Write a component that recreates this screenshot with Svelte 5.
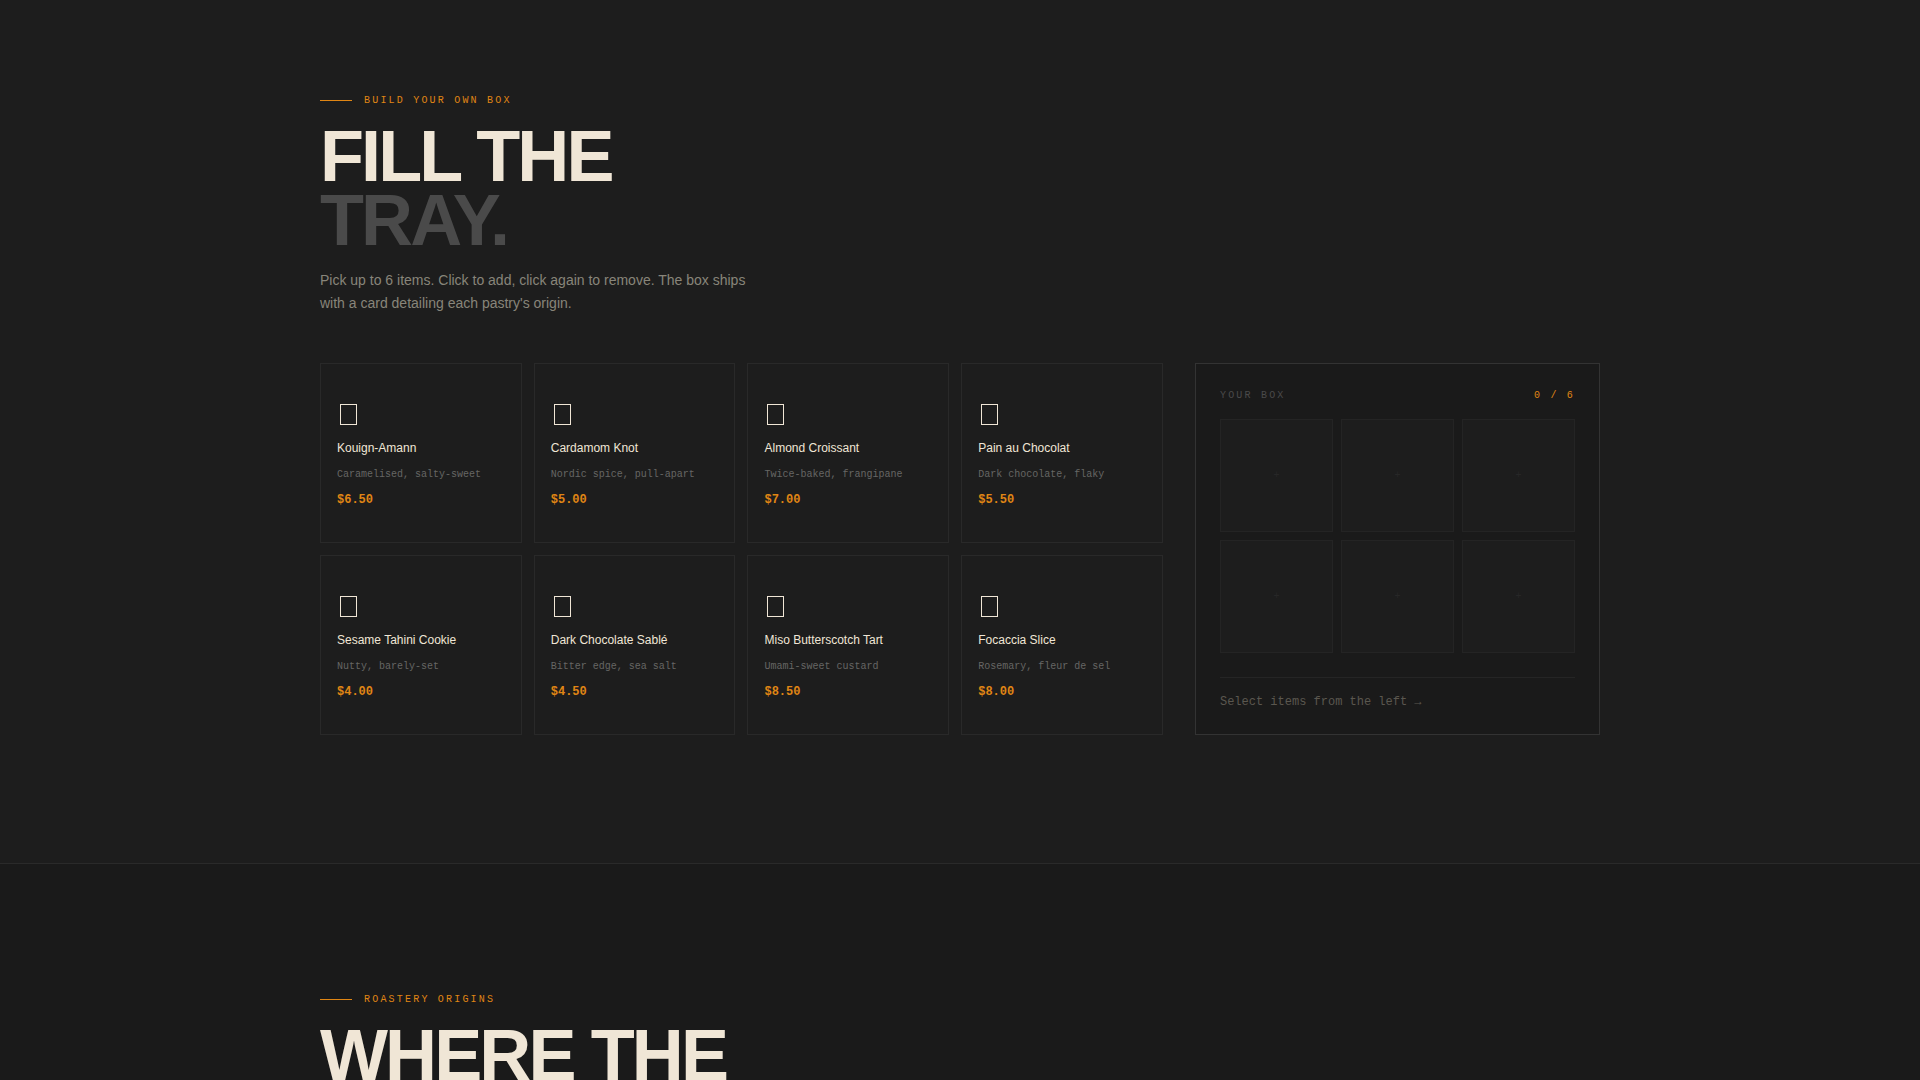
<script>
  const items = [
    { name: 'Kouign-Amann', note: 'Caramelised, salty-sweet', price: 6.5 },
    { name: 'Cardamom Knot', note: 'Nordic spice, pull-apart', price: 5 },
    { name: 'Almond Croissant', note: 'Twice-baked, frangipane', price: 7 },
    { name: 'Pain au Chocolat', note: 'Dark chocolate, flaky', price: 5.5 },
    { name: 'Sesame Tahini Cookie', note: 'Nutty, barely-set', price: 4 },
    { name: 'Dark Chocolate Sablé', note: 'Bitter edge, sea salt', price: 4.5 },
    { name: 'Miso Butterscotch Tart', note: 'Umami-sweet custard', price: 8.5 },
    { name: 'Focaccia Slice', note: 'Rosemary, fleur de sel', price: 8 }
  ];
  const capacity = 6;
  const slots = Array.from({ length: capacity }, (_, i) => i);

  let picked = $state([]);
  let total = $derived(picked.reduce((sum, i) => sum + items[i].price, 0));

  function toggle(i) {
    if (picked.includes(i)) picked = picked.filter((p) => p !== i);
    else if (picked.length < capacity) picked = [...picked, i];
  }
</script>

<main>
  <section class="build">
    <div class="container">
      <p class="eyebrow">BUILD YOUR OWN BOX</p>
      <h2>FILL THE<br /><span class="dim">TRAY.</span></h2>
      <p class="lead">
        Pick up to 6 items. Click to add, click again to remove. The box ships with a card detailing
        each pastry's origin.
      </p>

      <div class="builder">
        <div class="menu">
          {#each items as item, i}
            <button
              type="button"
              class="card"
              class:selected={picked.includes(i)}
              aria-pressed={picked.includes(i)}
              onclick={() => toggle(i)}
            >
              <span class="glyph" aria-hidden="true"></span>
              <span class="name">{item.name}</span>
              <span class="note">{item.note}</span>
              <span class="price">${item.price.toFixed(2)}</span>
            </button>
          {/each}
        </div>

        <aside class="box">
          <header>
            <span class="label">YOUR BOX</span>
            <span class="count">{picked.length} / {capacity}</span>
          </header>
          <div class="slots">
            {#each slots as s}
              <div class="slot">
                {#if s < picked.length}
                  <span class="glyph"></span>
                {:else}
                  +
                {/if}
              </div>
            {/each}
          </div>
          <footer>
            {#if picked.length}Total ${total.toFixed(2)}{:else}Select items from the left →{/if}
          </footer>
        </aside>
      </div>
    </div>
  </section>

  <section class="origins">
    <div class="container">
      <p class="eyebrow">ROASTERY ORIGINS</p>
      <h2>WHERE THE</h2>
    </div>
  </section>
</main>

<style>
  :global(body) {
    margin: 0;
    background: #1a1a1a;
  }
  main {
    height: 100vh;
    overflow: hidden;
    color: #f0e6d6;
    font-family: 'Liberation Sans', Arial, sans-serif;
  }
  .build {
    padding: 93px 32px 128px;
    background: #1d1d1d;
  }
  .origins {
    padding: 128px 32px;
    border-top: 1px solid #2a2a2a;
    background: #1a1a1a;
  }
  .container {
    max-width: 1280px;
    margin: 0 auto;
  }
  .eyebrow {
    display: flex;
    align-items: center;
    gap: 12px;
    margin: 0 0 16px;
    color: #e08614;
    font: 10px/15px 'Liberation Mono', monospace;
    letter-spacing: 0.22em;
  }
  .eyebrow::before {
    content: '';
    width: 32px;
    height: 1px;
    background: currentColor;
  }
  h2 {
    margin: 0;
    font-size: 72px;
    font-weight: 700;
    line-height: 64px;
    letter-spacing: -0.04em;
  }
  .dim {
    color: #4a4a4a;
  }
  .lead {
    max-width: 440px;
    margin: 17px 0 48px;
    color: #88857a;
    font-size: 14px;
    line-height: 23px;
  }
  .builder {
    display: grid;
    grid-template-columns: minmax(0, 77fr) minmax(0, 37fr);
    gap: 32px;
  }
  .menu {
    display: grid;
    grid-template-columns: repeat(4, minmax(0, 1fr));
    grid-auto-rows: 1fr;
    gap: 12px;
  }
  .card {
    display: flex;
    flex-direction: column;
    align-items: flex-start;
    justify-content: center;
    padding: 16px;
    border: 1px solid #292929;
    border-radius: 0;
    background: #1d1d1d;
    color: inherit;
    font-family: inherit;
    text-align: left;
    cursor: pointer;
  }
  .card.selected {
    border-color: #e08614;
  }
  .glyph {
    box-sizing: border-box;
    width: 17px;
    height: 21px;
    margin: 0 3px;
    border: 1px solid #f0e6d6;
  }
  .card .glyph {
    margin-top: 5px;
  }
  .name {
    margin-top: 16px;
    font-size: 12px;
    line-height: 14px;
  }
  .note {
    margin-top: 13px;
    color: #666664;
    font: 10px/14px 'Liberation Mono', monospace;
  }
  .price {
    margin-top: 10px;
    color: #e08614;
    font: bold 12px/16px 'Liberation Mono', monospace;
  }
  .box {
    padding: 24px;
    border: 1px solid #333;
    background: #1a1a1a;
  }
  .box header {
    display: flex;
    justify-content: space-between;
    margin-bottom: 16px;
    font: 10px/15px 'Liberation Mono', monospace;
    letter-spacing: 0.22em;
  }
  .label {
    color: #4a4a4a;
  }
  .count {
    color: #e08614;
  }
  .slots {
    display: grid;
    grid-template-columns: repeat(3, minmax(0, 1fr));
    gap: 8px;
  }
  .slot {
    display: grid;
    place-items: center;
    box-sizing: border-box;
    aspect-ratio: 1;
    border: 1px solid #242424;
    background: #1d1d1d;
    color: #272727;
    font: 10px/15px 'Liberation Mono', monospace;
  }
  .box footer {
    margin-top: 24px;
    padding-top: 16px;
    border-top: 1px solid #252525;
    color: #5a574f;
    font: 12px/16px 'Liberation Mono', monospace;
  }
</style>
